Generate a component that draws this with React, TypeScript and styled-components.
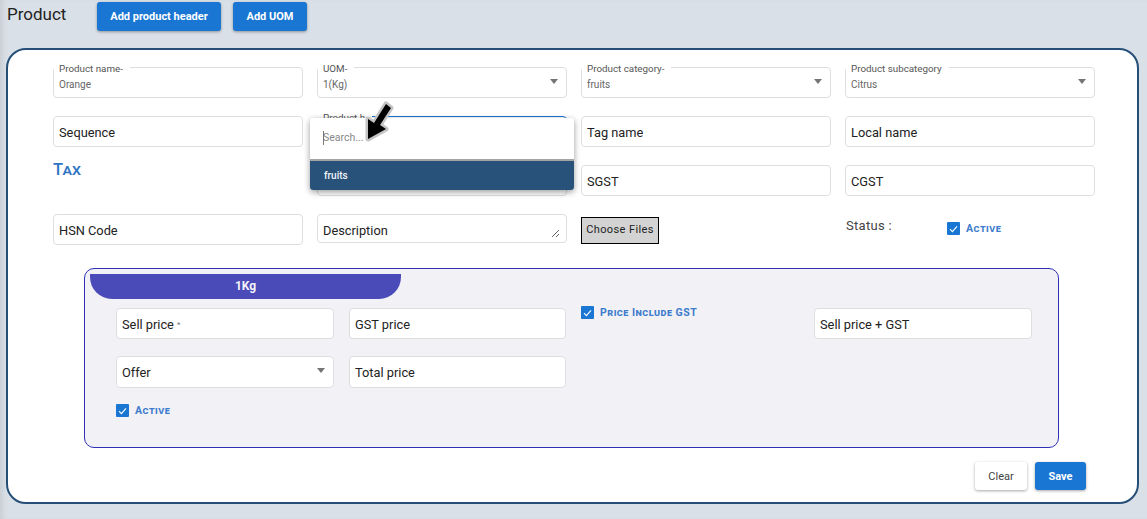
import React from 'react';
import styled, { createGlobalStyle } from 'styled-components';

const GlobalStyle = createGlobalStyle`
  html, body {
    margin: 0;
    padding: 0;
    height: 100%;
    overflow: hidden;
    background: #dae0e7;
    font-family: Roboto, "Liberation Sans", sans-serif;
  }
  * { box-sizing: border-box; }
`;

const Page = styled.div`
  width: 1147px;
  height: 519px;
  padding: 2px 8px 0 6px;
  background: #dae0e7;
  box-shadow: inset 6px 0 6px -4px rgba(0, 0, 0, 0.1);
`;

const Header = styled.div`
  display: flex;
  align-items: flex-start;
  gap: 12px;
  height: 29px;
  margin-bottom: 17px;
`;

const Title = styled.h1`
  width: 78px;
  margin: 2px 0 0 1px;
  font-size: 17px;
  line-height: 20px;
  font-weight: 400;
  color: #222;
`;

const Button = styled.button<{ $light?: boolean; $w?: number; $h?: number }>`
  width: ${(p) => p.$w}px;
  height: ${(p) => p.$h}px;
  padding: 0;
  border: none;
  border-radius: 3px;
  background: ${(p) => (p.$light ? '#fff' : '#1976d2')};
  color: ${(p) => (p.$light ? '#444' : '#fff')};
  font-family: inherit;
  font-size: 11px;
  font-weight: ${(p) => (p.$light ? 400 : 700)};
  box-shadow: 0 1px 3px rgba(0, 0, 0, 0.35);
`;

const Card = styled.section`
  width: 1133px;
  height: 456px;
  padding: 17px 0 0 45px;
  background: #fff;
  border: 2px solid #264f78;
  border-radius: 20px;
`;

const FormGrid = styled.div`
  display: grid;
  grid-template-columns: repeat(4, 250px);
  grid-auto-rows: 31px;
  column-gap: 14px;
  row-gap: 18px;
`;

const Cell = styled.div`
  position: relative;
`;

const FieldBox = styled.div<{ $focused?: boolean; $tall?: boolean }>`
  position: relative;
  height: 100%;
  padding: ${(p) => (p.$tall ? '0' : '2px')} 5px 0;
  display: flex;
  align-items: center;
  background: #fff;
  border: 1px solid ${(p) => (p.$focused ? '#1976d2' : '#dedede')};
  border-radius: 4px;
  font-size: 12.8px;
  color: #222;
`;

const LegendBox = styled(FieldBox)`
  align-items: flex-start;
  padding-top: 10px;
  font-size: 10px;
  line-height: 13px;
  color: #666;
`;

const Legend = styled.span`
  position: absolute;
  top: -5px;
  left: 0;
  padding: 0 7px 0 5px;
  background: #fff;
  font-size: 9.8px;
  line-height: 12px;
  color: #555;
  white-space: nowrap;
`;

const Caret = styled.span`
  position: absolute;
  right: 8px;
  top: 50%;
  margin-top: -4px;
  width: 0;
  height: 0;
  border-left: 4.5px solid transparent;
  border-right: 4.5px solid transparent;
  border-top: 5px solid #757575;
`;

const DescriptionBox = styled.div`
  height: 29px;
  padding: 8px 6px 4px 5px;
  border: 1px solid #dedede;
  border-radius: 4px;
`;

const TextArea = styled.textarea`
  display: block;
  width: 100%;
  height: 15px;
  padding: 0;
  border: none;
  outline: none;
  overflow: hidden;
  resize: both;
  font-family: inherit;
  font-size: 12.8px;
  line-height: 16px;
  color: #222;
  &::placeholder { color: #222; opacity: 1; }
`;

const TaxHeading = styled.div`
  margin-top: -5px;
  font-size: 16.5px;
  line-height: 20px;
  font-weight: 500;
  font-variant: small-caps;
  color: #2f74c4;
`;

const FileCell = styled.div`
  padding-top: 3px;
`;

const FileButton = styled.button`
  display: block;
  width: 78px;
  height: 27px;
  padding: 0 0 2px;
  background: #d3d3d3;
  border: 1px solid #000;
  font-family: inherit;
  font-size: 11px;
  letter-spacing: 0.4px;
  color: #222;
`;

const StatusCell = styled.div`
  display: flex;
  align-items: flex-start;
`;

const StatusLabel = styled.span`
  width: 101px;
  margin: 4px 0 0 1px;
  font-size: 13px;
  line-height: 16px;
  letter-spacing: 0.3px;
  color: #444;
`;

const CheckRow = styled.label<{ $top?: number }>`
  display: flex;
  align-items: center;
  gap: 6px;
  height: 13px;
  margin-top: ${(p) => p.$top ?? 0}px;
`;

const CheckBox = styled.span`
  width: 13px;
  height: 13px;
  display: flex;
  align-items: center;
  justify-content: center;
  background: #1976d2;
  border-radius: 1px;
`;

const CheckLabel = styled.span`
  font-size: 10.5px;
  font-weight: 700;
  font-variant: small-caps;
  letter-spacing: 0.5px;
  color: #3d7ccc;
`;

const Dropdown = styled.div`
  position: absolute;
  top: 2px;
  left: -7px;
  width: 264px;
  height: 72px;
  background: #fff;
  border-radius: 3px;
  box-shadow: 0 2px 6px rgba(0, 0, 0, 0.4);
  overflow: hidden;
  z-index: 5;
`;

const SearchRow = styled.div`
  height: 43px;
  padding: 12px 0 0 13px;
  border-bottom: 2px solid #a4a4a4;
  font-size: 10.5px;
  line-height: 16px;
  color: #888;
  position: relative;
`;

const TextCaret = styled.span`
  position: absolute;
  left: 13px;
  top: 13px;
  width: 1px;
  height: 14px;
  background: #777;
`;

const Option = styled.div`
  height: 29px;
  padding-left: 14px;
  display: flex;
  align-items: center;
  background: #29527a;
  color: #f1f4f8;
  font-size: 10px;
  font-weight: 500;
`;

const Pointer = styled.svg`
  position: absolute;
  top: -18px;
  left: 42px;
  z-index: 6;
`;

const Panel = styled.div`
  width: 975px;
  height: 180px;
  margin: 23px 0 0 31px;
  padding: 5px;
  background: #f1f1f6;
  border: 1px solid #2f2fb5;
  border-radius: 10px;
`;

const Tab = styled.div`
  width: 311px;
  height: 25px;
  padding-bottom: 2px;
  display: flex;
  align-items: center;
  justify-content: center;
  background: #4a4ab8;
  border-radius: 0 0 22px 22px;
  color: #f4f4fb;
  font-size: 12px;
  font-weight: 700;
`;

const PanelGrid = styled.div`
  display: grid;
  grid-template-columns: 218px 217px 218px 218px;
  grid-template-rows: 31px 32px 13px;
  column-gap: 15px;
  row-gap: 17px;
  margin: 9px 0 0 26px;
`;

const ActiveCell = styled.div`
  grid-row: 3;
  grid-column: 1;
  margin-top: -1px;
`;

const PanelSpacer = styled.div`
  grid-column: 3 / span 2;
`;

const Required = styled.span`
  margin-left: 3px;
  font-size: 8px;
  color: #777;
`;

const Actions = styled.div`
  display: flex;
  justify-content: flex-end;
  gap: 8px;
  width: 1033px;
  margin-top: 14px;
`;

const Tick = () => (
  <svg width="9" height="8" viewBox="0 0 9 8" fill="none">
    <path d="M1 4.2 3.4 6.6 8 1.4" stroke="#fff" strokeWidth="1.1" />
  </svg>
);

const Checked: React.FC<{ label: string; top?: number }> = ({ label, top }) => (
  <CheckRow $top={top}>
    <CheckBox>
      <Tick />
    </CheckBox>
    <CheckLabel>{label}</CheckLabel>
  </CheckRow>
);

const TopField: React.FC<{ label: string; value: string; select?: boolean }> = ({ label, value, select }) => (
  <LegendBox>
    <Legend>{label}</Legend>
    {value}
    {select && <Caret />}
  </LegendBox>
);

export default function App() {
  return (
    <Page>
      <GlobalStyle />
      <Header>
        <Title>Product</Title>
        <Button $w={124} $h={29}>Add product header</Button>
        <Button $w={74} $h={29}>Add UOM</Button>
      </Header>
      <Card>
        <FormGrid>
          <TopField label="Product name-" value="Orange" />
          <TopField label="UOM-" value="1(Kg)" select />
          <TopField label="Product category-" value="fruits" select />
          <TopField label="Product subcategory" value="Citrus" select />

          <FieldBox>Sequence</FieldBox>
          <Cell>
            <LegendBox $focused>
              <Legend>Product h</Legend>
            </LegendBox>
            <Dropdown>
              <SearchRow>
                <TextCaret />
                Search...
              </SearchRow>
              <Option>fruits</Option>
            </Dropdown>
            <Pointer width="40" height="50" viewBox="0 0 40 50">
              <path
                d="M27 6 32 10 21 27 27 31 9 41 9 21 15 25Z"
                fill="#000"
                stroke="#c4c4c4"
                strokeWidth="5"
                strokeLinejoin="round"
                paintOrder="stroke"
              />
            </Pointer>
          </Cell>
          <FieldBox>Tag name</FieldBox>
          <FieldBox>Local name</FieldBox>

          <TaxHeading>Tax</TaxHeading>
          <FieldBox />
          <FieldBox>SGST</FieldBox>
          <FieldBox>CGST</FieldBox>

          <FieldBox>HSN Code</FieldBox>
          <DescriptionBox>
            <TextArea placeholder="Description" />
          </DescriptionBox>
          <FileCell>
            <FileButton>Choose Files</FileButton>
          </FileCell>
          <StatusCell>
            <StatusLabel>Status :</StatusLabel>
            <Checked label="Active" top={8} />
          </StatusCell>
        </FormGrid>

        <Panel>
          <Tab>1Kg</Tab>
          <PanelGrid>
            <FieldBox>
              Sell price<Required>*</Required>
            </FieldBox>
            <FieldBox>GST price</FieldBox>
            <Checked label="Price Include GST" top={-2} />
            <FieldBox>Sell price + GST</FieldBox>

            <FieldBox $tall>
              Offer
              <Caret />
            </FieldBox>
            <FieldBox $tall>Total price</FieldBox>
            <PanelSpacer />

            <ActiveCell>
              <Checked label="Active" />
            </ActiveCell>
          </PanelGrid>
        </Panel>

        <Actions>
          <Button $light $w={52} $h={28}>Clear</Button>
          <Button $w={51} $h={28}>Save</Button>
        </Actions>
      </Card>
    </Page>
  );
}
